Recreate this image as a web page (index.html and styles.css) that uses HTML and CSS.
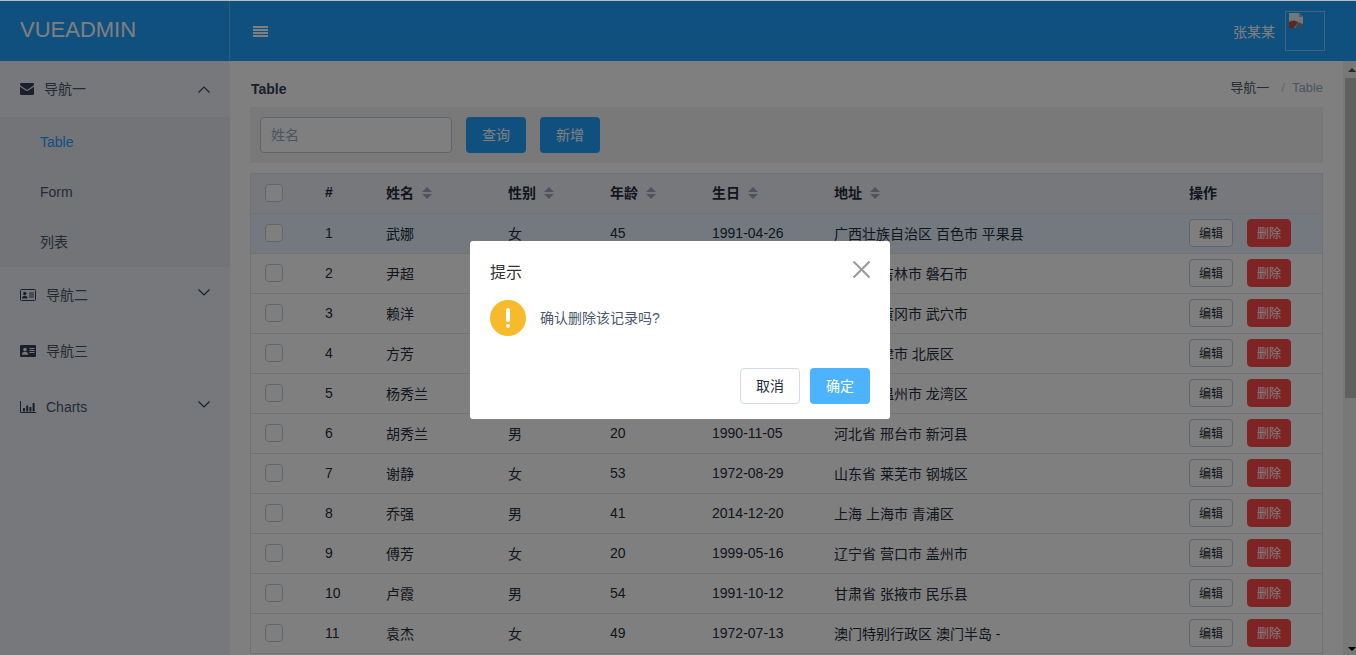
FILE: index.html
```html
<!DOCTYPE html>
<html lang="zh-CN">
<head>
  <meta charset="UTF-8">
  <meta name="viewport" content="width=device-width, initial-scale=1.0">
  <title>VUEADMIN - Table</title>
  <link rel="stylesheet" href="styles.css">
</head>
<body>

  <header class="topbar">
    <div class="logo">VUEADMIN</div>
    <div class="tools">
      <svg class="bars" width="15" height="11" viewBox="0 0 15 11"><path d="M0 0h15v2H0zM0 3h15v2H0zM0 6h15v2H0zM0 9h15v2H0z" fill="#fff"/></svg>
    </div>
    <div class="userinfo">
      <span class="username">张某某</span>
      <div class="avatar">
        <svg width="16" height="16" viewBox="0 0 16 16"><path d="M1 0h10l4 4v11H1z" fill="#e8eef4"/><path d="M11 0l4 4h-4z" fill="#9fb4c8"/><path d="M1 9c3-2 6-2 9 0l-4 6H1z" fill="#b5533a"/><path d="M10 9l5 2v4H7z" fill="#6f8fb0"/></svg>
      </div>
    </div>
  </header>

  <div class="layout">
    <aside class="sidebar">
      <div class="menu-title">
        <svg class="icon" width="14" height="14" viewBox="0 0 14 12"><path d="M0 1.2C0 .5.5 0 1.2 0h11.6c.7 0 1.2.5 1.2 1.2 0 .7-.5 1.3-1 1.7L7.700 6.500c-.4.300-1 .300-1.400 0L1 2.900C.5 2.500 0 1.900 0 1.200z" fill="#324057"/><path d="M0 3.800V10.800c0 .7.5 1.200 1.200 1.200h11.600c.7 0 1.200-.5 1.200-1.200V3.800L8.300 7.500c-.8.500-1.800.500-2.600 0z" fill="#324057"/></svg>
        <span class="cjk">导航一</span>
        <svg class="chevron" width="12" height="7" viewBox="0 0 12 7"><path d="M.5 6.500L6 1l5.500 5.500" fill="none" stroke="#324057" stroke-width="1.200"/></svg>
      </div>
      <ul class="submenu">
        <li class="active">Table</li>
        <li>Form</li>
        <li>列表</li>
      </ul>
      <div class="menu-title">
        <svg class="icon" width="16" height="14" viewBox="0 0 16 12"><rect x=".5" y=".5" width="15" height="11" rx="1" fill="none" stroke="#324057"/><circle cx="4.800" cy="4.500" r="1.700" fill="#324057"/><path d="M2 9.500c0-2 1-2.800 2.800-2.800s2.800.8 2.800 2.800z" fill="#324057"/><path d="M9 4h5M9 6h5M9 8h5" stroke="#324057"/></svg>
        <span class="cjk">导航二</span>
        <svg class="chevron down" width="12" height="7" viewBox="0 0 12 7"><path d="M.5.500L6 6l5.500-5.500" fill="none" stroke="#324057" stroke-width="1.200"/></svg>
      </div>
      <div class="menu-title">
        <svg class="icon" width="16" height="14" viewBox="0 0 16 12"><rect width="16" height="12" rx="1" fill="#324057"/><circle cx="5" cy="4.500" r="1.800" fill="#eef1f6"/><path d="M2 9.800c0-2.200 1-3 3-3s3 .8 3 3z" fill="#eef1f6"/><path d="M9.500 3.500h5M9.500 5.500h5M9.500 7.500h5" stroke="#eef1f6"/></svg>
        <span class="cjk">导航三</span>
      </div>
      <div class="menu-title">
        <svg class="icon" width="16" height="14" viewBox="0 0 16 12"><path d="M.5 0v11.500H16" fill="none" stroke="#324057"/><path d="M3 7h2v3.500H3zM6.200 4.500h2v6h-2zM9.400 6h2v4.500h-2zM12.600 2h2v8.500h-2z" fill="#324057"/></svg>
        <span>Charts</span>
        <svg class="chevron down" width="12" height="7" viewBox="0 0 12 7"><path d="M.5.500L6 6l5.500-5.500" fill="none" stroke="#324057" stroke-width="1.200"/></svg>
      </div>
    </aside>

    <main class="content">
      <div class="crumbs">
        <strong class="page-title">Table</strong>
        <div class="breadcrumb"><span>导航一</span><i>/</i><em>Table</em></div>
      </div>

      <div class="toolbar">
        <input class="search" type="text" placeholder="姓名">
        <button class="btn-primary" type="button">查询</button>
        <button class="btn-primary" type="button">新增</button>
      </div>

      <table class="grid">
        <colgroup>
          <col class="c-check"><col class="c-index"><col class="c-name"><col class="c-sex"><col class="c-age"><col class="c-birth"><col class="c-addr"><col class="c-ops">
        </colgroup>
        <thead>
          <tr>
            <th class="check"><span class="box"></span></th>
            <th>#</th>
            <th>姓名<span class="caret"></span></th>
            <th>性别<span class="caret"></span></th>
            <th>年龄<span class="caret"></span></th>
            <th>生日<span class="caret"></span></th>
            <th>地址<span class="caret"></span></th>
            <th>操作</th>
          </tr>
        </thead>
        <tbody>
          <tr class="current"><td class="check"><span class="box"></span></td><td>1</td><td>武娜</td><td>女</td><td>45</td><td>1991-04-26</td><td>广西壮族自治区 百色市 平果县</td><td><button class="mini" type="button">编辑</button><button class="mini danger" type="button">删除</button></td></tr>
          <tr><td class="check"><span class="box"></span></td><td>2</td><td>尹超</td><td>男</td><td>31</td><td>1988-03-12</td><td>吉林省 吉林市 磐石市</td><td><button class="mini" type="button">编辑</button><button class="mini danger" type="button">删除</button></td></tr>
          <tr><td class="check"><span class="box"></span></td><td>3</td><td>赖洋</td><td>男</td><td>27</td><td>1995-07-08</td><td>湖北省 黄冈市 武穴市</td><td><button class="mini" type="button">编辑</button><button class="mini danger" type="button">删除</button></td></tr>
          <tr><td class="check"><span class="box"></span></td><td>4</td><td>方芳</td><td>女</td><td>38</td><td>1980-10-21</td><td>天津 天津市 北辰区</td><td><button class="mini" type="button">编辑</button><button class="mini danger" type="button">删除</button></td></tr>
          <tr><td class="check"><span class="box"></span></td><td>5</td><td>杨秀兰</td><td>女</td><td>62</td><td>1976-02-17</td><td>浙江省 温州市 龙湾区</td><td><button class="mini" type="button">编辑</button><button class="mini danger" type="button">删除</button></td></tr>
          <tr><td class="check"><span class="box"></span></td><td>6</td><td>胡秀兰</td><td>男</td><td>20</td><td>1990-11-05</td><td>河北省 邢台市 新河县</td><td><button class="mini" type="button">编辑</button><button class="mini danger" type="button">删除</button></td></tr>
          <tr><td class="check"><span class="box"></span></td><td>7</td><td>谢静</td><td>女</td><td>53</td><td>1972-08-29</td><td>山东省 莱芜市 钢城区</td><td><button class="mini" type="button">编辑</button><button class="mini danger" type="button">删除</button></td></tr>
          <tr><td class="check"><span class="box"></span></td><td>8</td><td>乔强</td><td>男</td><td>41</td><td>2014-12-20</td><td>上海 上海市 青浦区</td><td><button class="mini" type="button">编辑</button><button class="mini danger" type="button">删除</button></td></tr>
          <tr><td class="check"><span class="box"></span></td><td>9</td><td>傅芳</td><td>女</td><td>20</td><td>1999-05-16</td><td>辽宁省 营口市 盖州市</td><td><button class="mini" type="button">编辑</button><button class="mini danger" type="button">删除</button></td></tr>
          <tr><td class="check"><span class="box"></span></td><td>10</td><td>卢霞</td><td>男</td><td>54</td><td>1991-10-12</td><td>甘肃省 张掖市 民乐县</td><td><button class="mini" type="button">编辑</button><button class="mini danger" type="button">删除</button></td></tr>
          <tr><td class="check"><span class="box"></span></td><td>11</td><td>袁杰</td><td>女</td><td>49</td><td>1972-07-13</td><td>澳门特别行政区 澳门半岛 -</td><td><button class="mini" type="button">编辑</button><button class="mini danger" type="button">删除</button></td></tr>
        </tbody>
      </table>
    </main>

    <div class="scrollbar">
      <span class="arrow-up"></span>
      <span class="thumb"></span>
      <span class="arrow-down"></span>
    </div>
  </div>

  <div class="mask"></div>

  <div class="msgbox">
    <div class="msgbox-head">
      <span class="msgbox-title">提示</span>
      <svg width="18" height="18" viewBox="0 0 18 18"><path d="M1.500 .5l16 16M17.500 .5l-16 16" stroke="#999999" stroke-width="2"/></svg>
    </div>
    <div class="msgbox-body">
      <span class="warn"><span class="warn-bar"></span><span class="warn-dot"></span></span>
      <p>确认删除该记录吗?</p>
    </div>
    <div class="msgbox-foot">
      <button class="btn-cancel" type="button">取消</button>
      <button class="btn-ok" type="button">确定</button>
    </div>
  </div>

</body>
</html>
```

FILE: styles.css
```css
* {
  box-sizing: border-box;
}
html, body {
  height: 100%;
}
body {
  margin: 0;
  padding-top: 1px;
  height: 655px;
  overflow: hidden;
  background-color: #bbbbbb;
  font-family: "Liberation Sans", "Noto Sans CJK SC", sans-serif;
  font-size: 14px;
  color: #1f2d3d;
}
button, input {
  font-family: inherit;
}

/* top bar */
.topbar {
  display: flex;
  align-items: center;
  height: 60px;
  background-color: #20a0ff;
  color: #fff;
}
.logo {
  width: 230px;
  height: 60px;
  padding-left: 20px;
  line-height: 58px;
  font-size: 22px;
  border-right: 1px solid rgba(238, 241, 246, 0.3);
}
.tools {
  flex: 1;
  padding-left: 23px;
  display: flex;
  align-items: center;
}
.userinfo {
  display: flex;
  align-items: center;
  padding-right: 31px;
}
.username {
  margin-right: 10px;
}
.avatar {
  width: 40px;
  height: 40px;
  border: 1px solid rgba(255, 255, 255, 0.45);
  padding: 1px 2px;
}
.avatar svg {
  display: block;
}

/* sidebar */
.layout {
  display: flex;
  height: 594px;
  background-color: #fff;
}
.sidebar {
  width: 230px;
  flex: none;
  background-color: #eef1f6;
  color: #48576a;
}
.menu-title {
  display: flex;
  align-items: center;
  height: 56px;
  padding: 0 20px;
}
.menu-title .icon {
  margin-right: 10px;
  flex: none;
}
.menu-title .chevron {
  margin-left: auto;
}
.menu-title .down {
  margin-bottom: 5px;
}
.menu-title .cjk {
  margin-bottom: 2px;
}
.submenu {
  list-style: none;
  margin: 0;
  padding: 0;
  background-color: #e4e8f1;
}
.submenu li {
  height: 50px;
  line-height: 50px;
  padding-left: 40px;
}
.submenu .active {
  color: #20a0ff;
}

/* main */
.content {
  flex: 1;
  padding: 0 20px;
  overflow: hidden;
}
.crumbs {
  display: flex;
  justify-content: space-between;
  align-items: center;
  height: 46px;
  padding: 2px 0 0 1px;
}
.page-title {
  margin-top: 8px;
  color: #324057;
}
.breadcrumb {
  margin-top: 2px;
  font-size: 13px;
}
.breadcrumb span {
  color: #48576a;
}
.breadcrumb i {
  font-style: normal;
  margin: 0 7px 0 12px;
  color: #bfcbd9;
}
.breadcrumb em {
  font-style: normal;
  color: #97a8be;
}
.toolbar {
  display: flex;
  align-items: center;
  height: 56px;
  padding-left: 10px;
  background-color: #f2f2f2;
  margin-bottom: 10px;
}
.search {
  width: 192px;
  height: 36px;
  padding: 0 10px;
  border: 1px solid #bfcbd9;
  border-radius: 4px;
  font-size: 14px;
  background-color: #fff;
  margin-right: 14px;
}
.search::placeholder {
  color: #97a8be;
}
.btn-primary {
  width: 60px;
  height: 36px;
  margin-right: 14px;
  padding: 0 0 2px;
  border: none;
  border-radius: 4px;
  background-color: #20a0ff;
  color: #fff;
  font-size: 14px;
}

/* table */
.grid {
  width: 1073px;
  border-collapse: separate;
  border-spacing: 0;
  table-layout: fixed;
  border: 1px solid #dfe6ec;
  border-bottom: none;
  color: #1f2d3d;
}
.c-check { width: 56px; }
.c-index { width: 61px; }
.c-name { width: 122px; }
.c-sex { width: 102px; }
.c-age { width: 102px; }
.c-birth { width: 122px; }
.c-addr { width: 355px; }
.c-ops { width: 151px; }
.grid th, .grid td {
  height: 40px;
  padding: 0 0 1px 18px;
  text-align: left;
  white-space: nowrap;
  border-bottom: 1px solid #dfe6ec;
}
.grid th {
  padding-bottom: 3px;
  background-color: #eef1f6;
  font-weight: bold;
}
.grid .check {
  padding-left: 14px;
  padding-bottom: 1px;
}
.current td {
  background-color: #e6f3ff;
}
.box {
  display: block;
  width: 18px;
  height: 18px;
  border: 1px solid #bfcbd9;
  border-radius: 4px;
  background-color: #fff;
}
.caret {
  display: inline-block;
  position: relative;
  width: 10px;
  height: 12px;
  margin-left: 8px;
  vertical-align: -1px;
}
.caret::before, .caret::after {
  content: "";
  position: absolute;
  left: 0;
  border-left: 5px solid transparent;
  border-right: 5px solid transparent;
}
.caret::before {
  top: 0;
  border-bottom: 5px solid #97a8be;
}
.caret::after {
  bottom: 0;
  border-top: 5px solid #97a8be;
}
.mini {
  display: inline-block;
  width: 44px;
  height: 28px;
  margin-right: 14px;
  padding: 0 0 1px;
  border: 1px solid #bfcbd9;
  border-radius: 4px;
  background-color: #fff;
  color: #1f2d3d;
  font-size: 12px;
  vertical-align: middle;
}
.mini.danger {
  border-color: #ff4949;
  background-color: #ff4949;
  color: #fff;
}

/* fake scrollbar */
.scrollbar {
  width: 13px;
  flex: none;
  display: flex;
  flex-direction: column;
  align-items: center;
  background-color: #f1f1f1;
  padding-left: 2px;
}
.arrow-up, .arrow-down {
  flex: none;
  margin-left: 2px;
  border-left: 4px solid transparent;
  border-right: 4px solid transparent;
}
.arrow-up {
  margin-top: 7px;
  border-bottom: 4px solid #505050;
}
.arrow-down {
  margin-top: auto;
  margin-bottom: 4px;
  border-top: 4px solid #000;
}
.thumb {
  width: 100%;
  height: 320px;
  margin-top: 6px;
  background-color: #c1c1c1;
}

/* modal */
.mask {
  position: fixed;
  top: 1px;
  left: 0;
  right: 0;
  bottom: 0;
  background-color: rgba(0, 0, 0, 0.5);
}
.msgbox {
  position: fixed;
  top: 241px;
  left: 470px;
  width: 420px;
  height: 178px;
  padding: 20px;
  background-color: #fff;
  border-radius: 3px;
}
.msgbox-head {
  display: flex;
  justify-content: space-between;
  align-items: flex-start;
  height: 24px;
  font-size: 16px;
  color: #333333;
}
.msgbox-title {
  margin-top: -2px;
}
.msgbox-body {
  display: flex;
  align-items: center;
  height: 36px;
  margin-top: 15px;
  color: #48576a;
}
.msgbox-body p {
  margin: 0 0 2px 14px;
}
.warn {
  position: relative;
  width: 36px;
  height: 36px;
  border-radius: 50%;
  background-color: #f7ba2a;
  flex: none;
}
.warn-bar {
  position: absolute;
  left: 16px;
  top: 8px;
  width: 4px;
  height: 14px;
  border-radius: 2px;
  background-color: #fff;
}
.warn-dot {
  position: absolute;
  left: 16px;
  top: 24px;
  width: 4px;
  height: 4px;
  border-radius: 50%;
  background-color: #fff;
}
.msgbox-foot {
  display: flex;
  justify-content: flex-end;
  margin-top: 32px;
}
.btn-cancel, .btn-ok {
  width: 60px;
  height: 36px;
  padding: 0 0 2px;
  border-radius: 4px;
  font-size: 14px;
}
.btn-cancel {
  border: 1px solid #d1dbe5;
  background-color: #fff;
  color: #1f2d3d;
}
.btn-ok {
  margin-left: 10px;
  border: none;
  background-color: #4db3ff;
  color: #fff;
}
```
